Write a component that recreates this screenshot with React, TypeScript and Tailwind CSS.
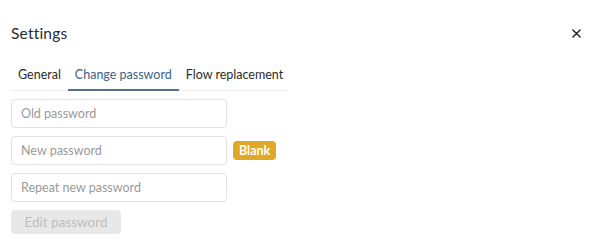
import { useState } from "react";

const tabs = ["General", "Change password", "Flow replacement"];

export default function App() {
  const [active, setActive] = useState(1);
  const [oldPw, setOldPw] = useState("");
  const [newPw, setNewPw] = useState("");
  const [repeatPw, setRepeatPw] = useState("");

  const inputClass =
    "w-[216px] h-[29px] px-[9px] border border-[#e2e2e2] rounded-[4px] bg-white text-[12.5px] text-[#444] placeholder:text-[#9a9a9a] focus:outline-none";

  return (
    <div className="w-[600px] h-[245px] bg-white font-['Lato','Noto_Sans',sans-serif] text-[#2b2b2b]">
      <div className="flex items-center justify-between pl-[11px] pr-[19px] pt-[24px]">
        <h1 className="text-[15.5px] font-normal leading-[18px] tracking-[0.2px]">Settings</h1>
        <button className="text-[#222] leading-none">
          <svg width="9" height="9" viewBox="0 0 10 10">
            <path d="M1 1L9 9M9 1L1 9" stroke="#222" strokeWidth="1.6" strokeLinecap="round" />
          </svg>
        </button>
      </div>

      <div className="ml-[11px] mt-[25px] w-[276px] flex border-b border-[#eeeeee]">
        {tabs.map((t, i) => (
          <button
            key={t}
            onClick={() => setActive(i)}
            className={
              "shrink-0 whitespace-nowrap px-[7px] pb-[6px] text-[12.5px] font-normal leading-[16px] -mb-px border-b-2 " +
              (i === active ? "text-[#3e5f84] border-[#56718f]" : "text-[#2b2b2b] border-transparent")
            }
          >
            {t}
          </button>
        ))}
      </div>

      <div className="pl-[11px] pt-[8px] flex flex-col gap-[8px]">
        <input
          type="password"
          placeholder="Old password"
          value={oldPw}
          onChange={(e) => setOldPw(e.target.value)}
          className={inputClass}
        />
        <div className="flex items-center gap-[6px]">
          <input
            type="password"
            placeholder="New password"
            value={newPw}
            onChange={(e) => setNewPw(e.target.value)}
            className={inputClass}
          />
          <span className="h-[19px] px-[6px] rounded-[4px] bg-[#e1a727] text-white text-[12.5px] font-bold leading-[19px]">
            Blank
          </span>
        </div>
        <input
          type="password"
          placeholder="Repeat new password"
          value={repeatPw}
          onChange={(e) => setRepeatPw(e.target.value)}
          className={inputClass}
        />
        <button
          disabled
          className="w-[110px] h-[24px] rounded-[4px] bg-[#e8e8e8] text-[#bdbdbd] text-[13.5px] font-normal"
        >
          Edit password
        </button>
      </div>
    </div>
  );
}
